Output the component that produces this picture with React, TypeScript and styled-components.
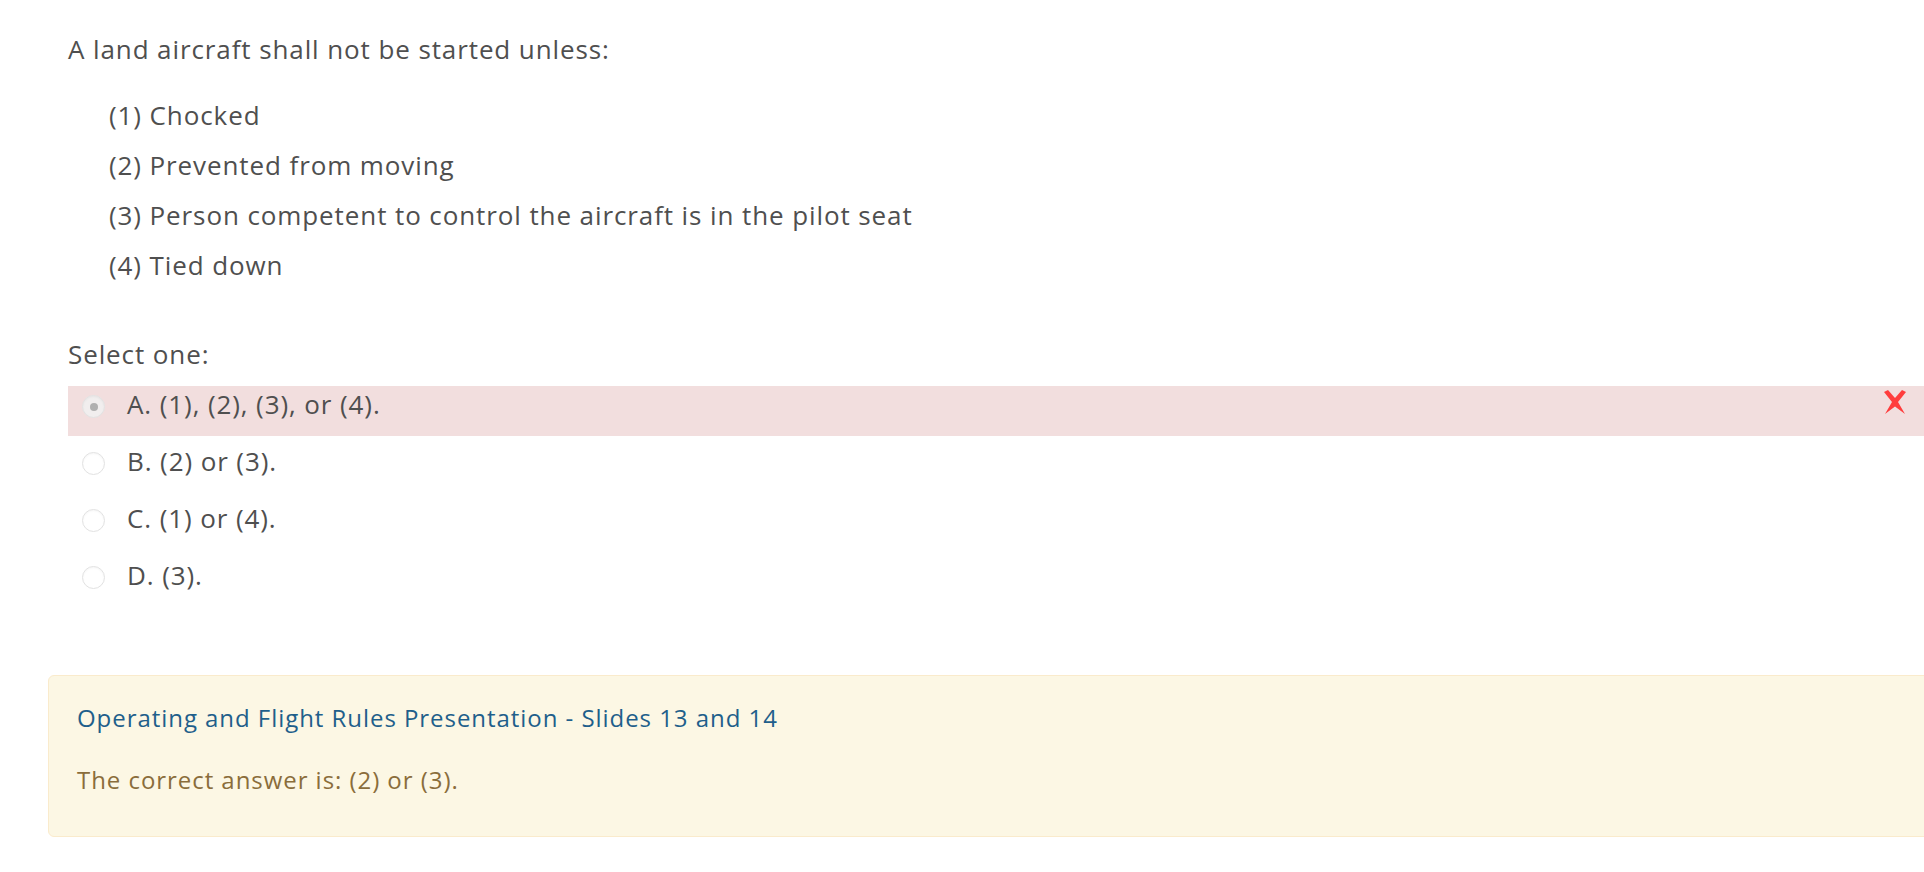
import { createGlobalStyle, styled } from "styled-components";

const GlobalStyle = createGlobalStyle`
  html, body {
    margin: 0;
    padding: 0;
    background: #ffffff;
    overflow: hidden;
  }
  body {
    font-family: "Open Sans", "Noto Sans", sans-serif;
    font-size: 26px;
    letter-spacing: 0.9px;
    color: #4f4f4f;
  }
`;

const items = [
  "(1) Chocked",
  "(2) Prevented from moving",
  "(3) Person competent to control the aircraft is in the pilot seat",
  "(4) Tied down",
];

const options = [
  { label: "A. (1), (2), (3), or (4).", checked: true },
  { label: "B. (2) or (3).", checked: false },
  { label: "C. (1) or (4).", checked: false },
  { label: "D. (3).", checked: false },
];

export default function App() {
  return (
    <>
      <GlobalStyle />
      <StPage>
        <StQuestion>
          <StPrompt>A land aircraft shall not be started unless:</StPrompt>
          <StItems>
            {items.map((item) => (
              <StItem key={item}>{item}</StItem>
            ))}
          </StItems>
          <StSelectLabel>Select one:</StSelectLabel>
          <StAnswers>
            {options.map((opt) => (
              <StOption key={opt.label} $incorrect={opt.checked}>
                <StRadio $checked={opt.checked} />
                <StOptionText>{opt.label}</StOptionText>
                {opt.checked && (
                  <StCross viewBox="0 0 26 26" aria-hidden>
                    <path
                      d="M2 3 L6 1 L13 9 L20 1 L24 3 L16 13 L23 25 L13 17.5 L3 25 L10 13 Z"
                      fill="#ff3d3d"
                    />
                  </StCross>
                )}
              </StOption>
            ))}
          </StAnswers>
        </StQuestion>
        <StFeedback>
          <StLink href="#">
            Operating and Flight Rules Presentation - Slides 13 and 14
          </StLink>
          <StRightAnswer>The correct answer is: (2) or (3).</StRightAnswer>
        </StFeedback>
      </StPage>
    </>
  );
}

interface StOptionProps {
  $incorrect?: boolean;
}

interface StRadioProps {
  $checked?: boolean;
}

const StPage = styled.div`
  width: 1920px;
  padding: 31px 0 0 48px;
  line-height: 36px;
`;

const StQuestion = styled.div`
  padding-left: 20px;
`;

const StPrompt = styled.p`
  margin: 0 0 23px;
`;

const StItems = styled.div`
  padding-left: 41px;
`;

const StItem = styled.p`
  margin: 0;
  line-height: 50px;
`;

const StSelectLabel = styled.p`
  margin: 46px 0 14px;
`;

const StAnswers = styled.div`
  display: flex;
  flex-direction: column;
  gap: 7px;
`;

const StOption = styled.div<StOptionProps>`
  display: flex;
  align-items: flex-start;
  height: 50px;
  box-sizing: border-box;
  padding: 0 60px 14px 14px;
  background: ${(props) => (props.$incorrect ? "#f2dede" : "transparent")};
`;

const StRadio = styled.span<StRadioProps>`
  position: relative;
  flex: none;
  width: 23px;
  height: 23px;
  margin-top: 9px;
  box-sizing: border-box;
  border-radius: 50%;
  border: 1px solid #e2e2e2;
  background: ${(props) => (props.$checked ? "#f1eeee" : "#ffffff")};
  box-shadow: inset 0 1px 2px rgba(0, 0, 0, 0.04);

  &::after {
    content: "";
    display: ${(props) => (props.$checked ? "block" : "none")};
    position: absolute;
    left: 50%;
    top: 50%;
    width: 8px;
    height: 8px;
    margin: -4px 0 0 -4px;
    border-radius: 50%;
    background: #b0b0b0;
  }
`;

const StOptionText = styled.span`
  flex: 1;
  margin-left: 22px;
`;

const StCross = styled.svg`
  flex: none;
  width: 26px;
  height: 26px;
  margin-top: 3px;
`;

const StFeedback = styled.div`
  margin-top: 68px;
  padding: 24px 28px 38px 28px;
  border: 1px solid #faebcc;
  border-radius: 6px;
  background: #fcf7e4;
  display: flex;
  flex-direction: column;
  gap: 26px;
  font-size: 24px;
  letter-spacing: 0.95px;
`;

const StLink = styled.a`
  color: #1f5f8b;
  text-decoration: none;
`;

const StRightAnswer = styled.p`
  margin: 0;
  color: #8a6d3b;
`;
